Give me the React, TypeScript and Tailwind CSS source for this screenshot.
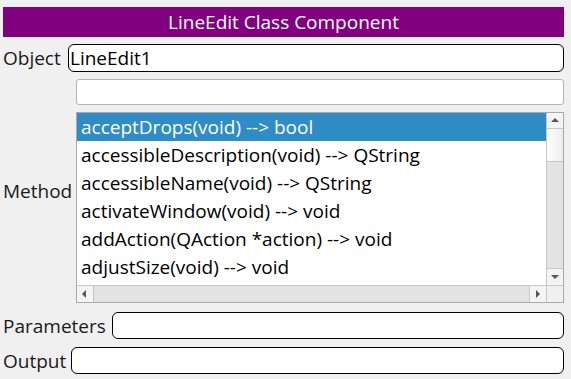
const methods = [
  'acceptDrops(void) --> bool',
  'accessibleDescription(void) --> QString',
  'accessibleName(void) --> QString',
  'activateWindow(void) --> void',
  'addAction(QAction *action) --> void',
  'adjustSize(void) --> void',
];

function Arrow({ dir }: { dir: 'up' | 'down' | 'left' | 'right' }) {
  const pts = {
    up: '1,6 5,2 9,6',
    down: '1,3 9,3 5,7',
    left: '6,1 6,9 2,5',
    right: '3,1 3,9 7,5',
  }[dir];
  return (
    <svg width="10" height="10" viewBox="0 0 10 10">
      <polygon points={pts} fill="#555" />
    </svg>
  );
}

export default function App() {
  return (
    <div
      className="w-[571px] h-[379px] bg-[#f0f0f0] pt-[7px] pl-[3px] pr-[7px] flex flex-col text-[19px] leading-[26px] text-[#1a1a1a]"
      style={{ fontFamily: '"Open Sans", "Noto Sans", sans-serif' }}
    >
      <div className="h-[30px] bg-[#800080] text-white flex items-center justify-center">
        LineEdit Class Component
      </div>

      <div className="mt-[7px] flex items-center h-[28px]">
        <span className="w-[65px] shrink-0">Object</span>
        <div className="flex-1 h-[28px] bg-white border border-black rounded-[6px] flex items-center px-[1px] text-black">
          LineEdit1
        </div>
      </div>

      <div className="mt-[7px] flex items-center">
        <span className="w-[73px] shrink-0">Method</span>
        <div className="flex-1 flex flex-col">
          <div className="h-[26px] bg-white border border-[#b4b4b4] rounded-[3px]" />
          <div className="mt-[7px] h-[191px] bg-white border border-[#a9a9a9] flex flex-col">
            <div className="flex flex-1 min-h-0">
              <div className="flex-1 flex flex-col overflow-hidden">
                {methods.map((m, i) => (
                  <div
                    key={m}
                    className={
                      'h-[28px] shrink-0 flex items-center px-[4px] whitespace-nowrap ' +
                      (i === 0 ? 'bg-[#308cc6] text-white' : 'text-black')
                    }
                  >
                    {m}
                  </div>
                ))}
              </div>
              <div className="w-[17px] border-l border-[#c8c8c8] bg-[#e3e3e3] flex flex-col">
                <div className="h-[16px] bg-[#f4f4f4] border-b border-[#c8c8c8] flex items-center justify-center">
                  <Arrow dir="up" />
                </div>
                <div className="h-[33px] bg-gradient-to-r from-[#ffffff] to-[#ececec] border-b border-[#c8c8c8]" />
                <div className="flex-1" />
                <div className="h-[17px] bg-[#f4f4f4] border-t border-[#c8c8c8] flex items-center justify-center">
                  <Arrow dir="down" />
                </div>
              </div>
            </div>
            <div className="h-[17px] border-t border-[#c8c8c8] flex">
              <div className="w-[17px] bg-[#f4f4f4] border-r border-[#c8c8c8] flex items-center justify-center">
                <Arrow dir="left" />
              </div>
              <div className="flex-1 bg-[#e3e3e3]" />
              <div className="w-[17px] bg-[#f4f4f4] border-l border-[#c8c8c8] flex items-center justify-center">
                <Arrow dir="right" />
              </div>
              <div className="w-[17px] bg-[#f0f0f0] border-l border-[#c8c8c8]" />
            </div>
          </div>
        </div>
      </div>

      <div className="mt-[9px] flex items-center h-[27px]">
        <span className="w-[109px] shrink-0">Parameters</span>
        <div className="flex-1 h-[27px] bg-white border border-black rounded-[6px]" />
      </div>

      <div className="mt-[8px] flex items-center h-[27px]">
        <span className="w-[68px] shrink-0">Output</span>
        <div className="flex-1 h-[27px] bg-white border border-black rounded-[6px]" />
      </div>
    </div>
  );
}
